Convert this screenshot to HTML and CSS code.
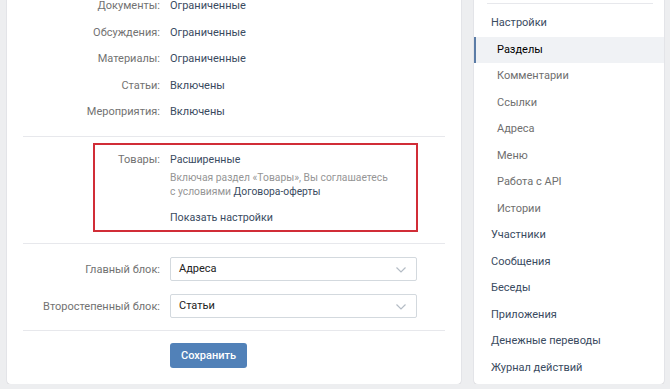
FILE: index.html
```html
<!DOCTYPE html>
<html lang="ru">
  <head>
    <meta charset="UTF-8" />
    <meta name="viewport" content="width=device-width, initial-scale=1.0" />
    <title>Разделы</title>
    <link rel="stylesheet" href="styles.css">
  </head>
  <body>
    <div class="layout">
      <div class="card main">
        <div class="section">
          <div class="row"><span class="label">Документы:</span><span class="value">Ограниченные</span></div>
          <div class="row"><span class="label">Обсуждения:</span><span class="value">Ограниченные</span></div>
          <div class="row"><span class="label">Материалы:</span><span class="value">Ограниченные</span></div>
          <div class="row"><span class="label">Статьи:</span><span class="value">Включены</span></div>
          <div class="row"><span class="label">Мероприятия:</span><span class="value">Включены</span></div>
        </div>

        <div class="section goods">
          <div class="highlight">
            <div class="row"><span class="label">Товары:</span><span class="value">Расширенные</span></div>
            <p class="hint">
              Включая раздел «Товары», Вы соглашаетесь<br />
              с условиями <a href="#">Договора-оферты</a>
            </p>
            <a class="more" href="#">Показать настройки</a>
          </div>
        </div>

        <div class="section blocks">
          <div class="field">
            <label class="label" for="mainBlock">Главный блок:</label>
            <div class="select" id="mainBlock">Адреса
              <svg class="chevron" width="12" height="8" viewBox="0 0 12 8"><path d="M1.5 1.5l4.5 4.5 4.5-4.5" /></svg>
            </div>
          </div>
          <div class="field">
            <label class="label" for="secondBlock">Второстепенный блок:</label>
            <div class="select" id="secondBlock">Статьи
              <svg class="chevron" width="12" height="8" viewBox="0 0 12 8"><path d="M1.5 1.5l4.5 4.5 4.5-4.5" /></svg>
            </div>
          </div>
        </div>

        <div class="section actions">
          <button type="button">Сохранить</button>
        </div>
      </div>

      <div class="card side">
        <div class="side-sep"></div>
        <a class="menu-item" href="#">Настройки</a>
        <a class="menu-item sub active" href="#">Разделы</a>
        <a class="menu-item sub" href="#">Комментарии</a>
        <a class="menu-item sub" href="#">Ссылки</a>
        <a class="menu-item sub" href="#">Адреса</a>
        <a class="menu-item sub" href="#">Меню</a>
        <a class="menu-item sub" href="#">Работа с API</a>
        <a class="menu-item sub" href="#">Истории</a>
        <a class="menu-item" href="#">Участники</a>
        <a class="menu-item" href="#">Сообщения</a>
        <a class="menu-item" href="#">Беседы</a>
        <a class="menu-item" href="#">Приложения</a>
        <a class="menu-item" href="#">Денежные переводы</a>
        <a class="menu-item" href="#">Журнал действий</a>
      </div>
    </div>
  </body>
</html>
```

FILE: styles.css
```css
body {
  margin: 0;
  background-color: #edeef0;
  font-family: Roboto, "Open Sans", Arial, sans-serif;
  font-size: 11px;
  color: #000;
}

a {
  text-decoration: none;
  color: #3a4b5f;
}

.layout {
  display: flex;
  align-items: flex-start;
  gap: 13px;
  margin-top: -7px;
  padding-left: 7px;
}

.card {
  background-color: #fff;
  border-radius: 0 0 4px 4px;
  box-shadow: 0 1px 0 0 #d7d8db, 0 0 0 1px #e3e4e8;
}

.main {
  width: 454px;
  padding: 0 16px;
  box-sizing: border-box;
}

.section {
  border-bottom: 1px solid #e7e8ec;
}

.section:first-child {
  padding-bottom: 10px;
}

.row {
  display: flex;
  gap: 10px;
  line-height: 16.5px;
  padding: 5px 0;
}

.label {
  width: 137px;
  flex-shrink: 0;
  text-align: right;
  color: #727272;
}

.value {
  color: #3a4b5f;
}

/* goods block with the red frame */
.goods {
  padding: 6px 0 11px;
}

.highlight {
  margin: 0 27px 0 70px;
  padding: 2px 0 4px;
  border: 2px solid #d12d37;
}

.highlight .label {
  width: 65px;
}

.highlight .value {
  font-size: 10.6px;
}

.hint {
  margin: -2px 0 0 75px;
  font-size: 10.3px;
  line-height: 14px;
  color: #959595;
}

.more {
  display: block;
  margin: 10.5px 0 0 75px;
  font-size: 10.7px;
  line-height: 16.5px;
}

/* selects */
.blocks {
  display: flex;
  flex-direction: column;
  gap: 13px;
  padding: 13px 0 12px;
}

.field {
  display: flex;
  align-items: center;
  gap: 10px;
}

.select {
  position: relative;
  width: 247px;
  height: 24px;
  box-sizing: border-box;
  padding-left: 8px;
  line-height: 22px;
  border: 1px solid #d3d9de;
  border-radius: 2px;
  color: #222;
}

.chevron {
  position: absolute;
  right: 9px;
  top: 8px;
}

.chevron path {
  fill: none;
  stroke: #b4bcc5;
  stroke-width: 1.2;
}

.actions {
  border-bottom: none;
  padding: 12px 0 16px 147px;
}

button {
  width: 77px;
  height: 25px;
  padding: 0;
  border: none;
  border-radius: 3px;
  background-color: #5181b8;
  color: #fff;
  font-family: inherit;
  font-size: 11px;
  font-weight: 500;
  cursor: pointer;
}

/* right menu */
.side {
  width: 190px;
  padding: 10px 0 3px;
}

.side-sep {
  height: 1px;
  margin: 0 11px 6px 13px;
  background-color: #e7e8ec;
}

.menu-item {
  display: block;
  line-height: 16.5px;
  padding: 5px 0 5px 17px;
  color: #3a4b5f;
}

.menu-item.sub {
  padding-left: 23px;
  color: #6f6f6f;
}

.menu-item.active {
  padding-left: 21px;
  border-left: 2px solid #5b7ca6;
  background-color: #f0f2f5;
  color: #000;
}
```
